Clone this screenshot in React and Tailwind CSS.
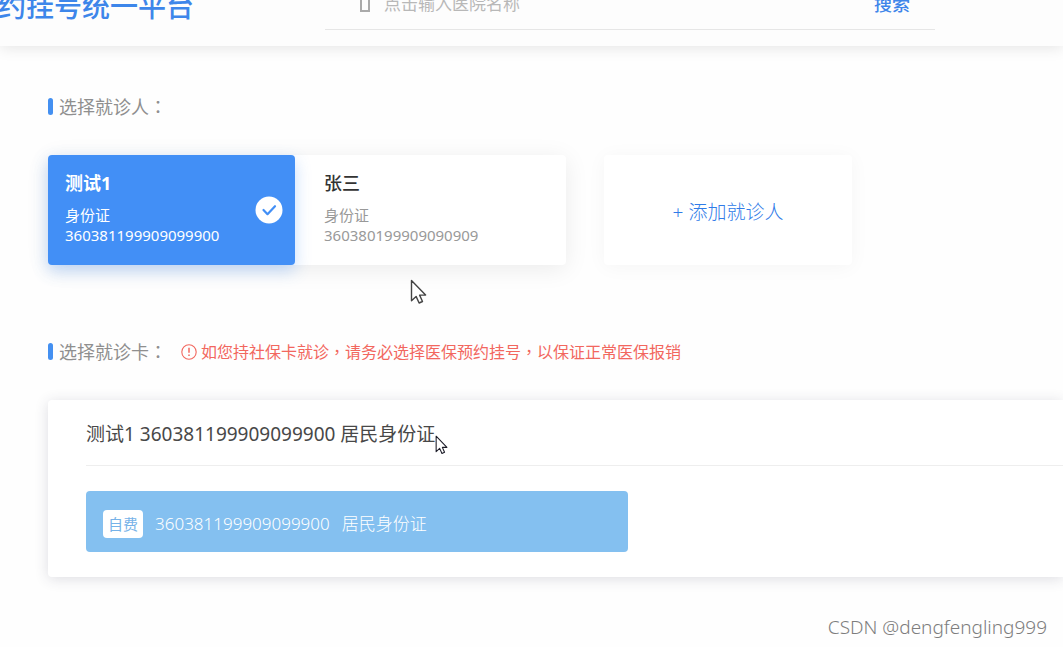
import { useState } from 'react'

const PATIENTS = [
  { id: 1, name: '测试1', type: '身份证', number: '360381199909099900' },
  { id: 2, name: '张三', type: '身份证', number: '360380199909090909' },
]

const CARDS = [
  { id: 1, kind: '自费', number: '360381199909099900', type: '居民身份证' },
]

export default function App() {
  const [keyword, setKeyword] = useState('')
  const [selected, setSelected] = useState(1)

  return (
    <div className="relative min-h-screen overflow-hidden bg-[#fefefe] font-['Noto_Sans','Noto_Sans_CJK_SC',sans-serif]">
      <Header keyword={keyword} onChange={setKeyword} />

      <main className="pl-12 pt-12 pb-[70px]">
        <SectionTitle text="选择就诊人" />

        <div className="mt-9 flex">
          <div className="flex rounded bg-white shadow-[0_4px_24px_rgba(0,0,0,0.08)]">
            {PATIENTS.map(p => (
              <PatientCard
                key={p.id}
                patient={p}
                active={selected === p.id}
                onClick={() => setSelected(p.id)}
              />
            ))}
          </div>
          <button className="ml-[38px] w-[248px] rounded bg-white pt-1 text-[19px] font-light text-[#2f7be8] shadow-[0_2px_20px_rgba(0,0,0,0.04)]">
            + 添加就诊人
          </button>
        </div>

        <div className="mt-[74px] flex items-center">
          <SectionTitle text="选择就诊卡" />
          <p className="ml-3.5 flex items-center gap-1 text-base leading-6 text-[#f2675e]">
            <WarnIcon />
            <span>
              如您持社保卡就诊<Mark>，</Mark>请务必选择医保预约挂号<Mark>，</Mark>以保证正常医保报销
            </span>
          </p>
        </div>

        {/* 就诊卡 */}
        <section className="mt-9 rounded-l bg-white pl-[38px] pt-[18px] pb-[25px] shadow-[0_2px_14px_rgba(50,50,80,0.16)]">
          <h2 className="border-b border-[#eeeeee] pb-[15px] text-[19px] leading-8 text-[#484848]">
            测试1 360381199909099900 居民身份证
          </h2>
          <div className="mt-[25px]">
            {CARDS.map(c => (
              <button
                key={c.id}
                className="flex h-[61px] w-full max-w-[542px] items-center rounded bg-[#84c0f0] px-[17px] pt-1 text-[17px] font-light text-white"
              >
                <span className="rounded bg-white px-[5px] text-[15px] font-normal leading-7 text-[#76b2e8]">{c.kind}</span>
                <span className="ml-3">{c.number}</span>
                <span className="ml-3">{c.type}</span>
              </button>
            ))}
          </div>
        </section>
      </main>

      <p className="absolute bottom-1 right-4 text-[19px] font-light leading-8 text-[#7d7d7d]">CSDN @dengfengling999</p>

      <Pointer className="absolute left-[410px] top-[279px] h-[26px] w-[17px] text-[#444444]" />
      <Pointer className="absolute left-[435px] top-[435px] h-[20px] w-[13px] text-[#1c1c28]" />
    </div>
  )
}

function Header({ keyword, onChange }) {
  return (
    <header className="-mt-[34px] flex h-20 items-center bg-[#fdfdfd] shadow-[0_2px_14px_rgba(0,0,0,0.10)]">
      <h1 className="-ml-0.5 w-[327px] shrink-0 text-[28px] font-medium leading-9 text-[#3d86ea]">约挂号统一平台</h1>
      <div className="flex h-12 w-full max-w-[610px] items-center self-end border-b border-[#e6e6e6] mb-4 pb-1">
        <span className="ml-[35px] h-4 w-[10px] shrink-0 border-2 border-[#aaaaaa]" />
        <input
          aria-label="医院名称"
          value={keyword}
          onChange={e => onChange(e.target.value)}
          placeholder="点击输入医院名称"
          className="ml-[14px] h-10 min-w-0 grow bg-transparent text-[17px] outline-none placeholder:text-[#b8b8b8]"
        />
        <button className="mr-[25px] shrink-0 text-lg font-medium text-[#3f86ea]">搜索</button>
      </div>
    </header>
  )
}

function SectionTitle({ text }) {
  return (
    <h2 className="flex items-center gap-[6px] text-lg leading-6 text-[#8f8f8f]">
      <span className="h-[17px] w-[5px] rounded-sm bg-[#4490f1]" />
      <span>{text}<Mark>：</Mark></span>
    </h2>
  )
}

// full-width punctuation centred in its cell
function Mark({ children }) {
  return <span className="font-['Noto_Sans_CJK_TC',sans-serif]">{children}</span>
}

function PatientCard({ patient, active, onClick }) {
  return (
    <button
      onClick={onClick}
      aria-pressed={active}
      className={`flex h-[110px] items-center justify-between rounded text-left ${
        active
          ? 'w-[247px] bg-[#428ff6] pl-[17px] pr-3 text-white shadow-[0_6px_16px_rgba(66,143,246,0.3)]'
          : 'w-[271px] pl-[29px] pr-3 text-[#999999]'
      }`}
    >
      <span className="flex flex-col pb-1">
        <span className={`text-lg leading-6 ${active ? 'font-bold' : 'font-medium text-[#333333]'}`}>{patient.name}</span>
        <span className="mt-2.5 text-[15px] leading-5">{patient.type}</span>
        <span className="text-[15px] leading-5">{patient.number}</span>
      </span>
      {active && <CheckIcon />}
    </button>
  )
}

function CheckIcon() {
  return (
    <svg viewBox="0 0 28 28" className="h-7 w-7" fill="none">
      <circle cx="14" cy="14" r="13.5" fill="#fff" />
      <path d="M8.5 14l4 4.2 7.5-8" stroke="#428ff6" strokeWidth="2.2" strokeLinecap="round" strokeLinejoin="round" />
    </svg>
  )
}

function WarnIcon() {
  return (
    <svg viewBox="0 0 16 16" className="h-4 w-4" fill="none" stroke="currentColor">
      <circle cx="8" cy="8" r="7.2" strokeWidth="1.1" />
      <path d="M8 3.8v5" strokeWidth="1.5" />
      <path d="M8 10.4v1.6" strokeWidth="1.5" />
    </svg>
  )
}

function Pointer({ className }) {
  return (
    <svg viewBox="0 0 17 26" className={`pointer-events-none ${className}`}>
      <path
        d="M1.5 1.5v20.2l4.6-4.3 3 6.6 3.4-1.5-2.9-6.4h6z"
        fill="#fff"
        stroke="currentColor"
        strokeWidth="1.4"
        strokeLinejoin="round"
      />
    </svg>
  )
}
